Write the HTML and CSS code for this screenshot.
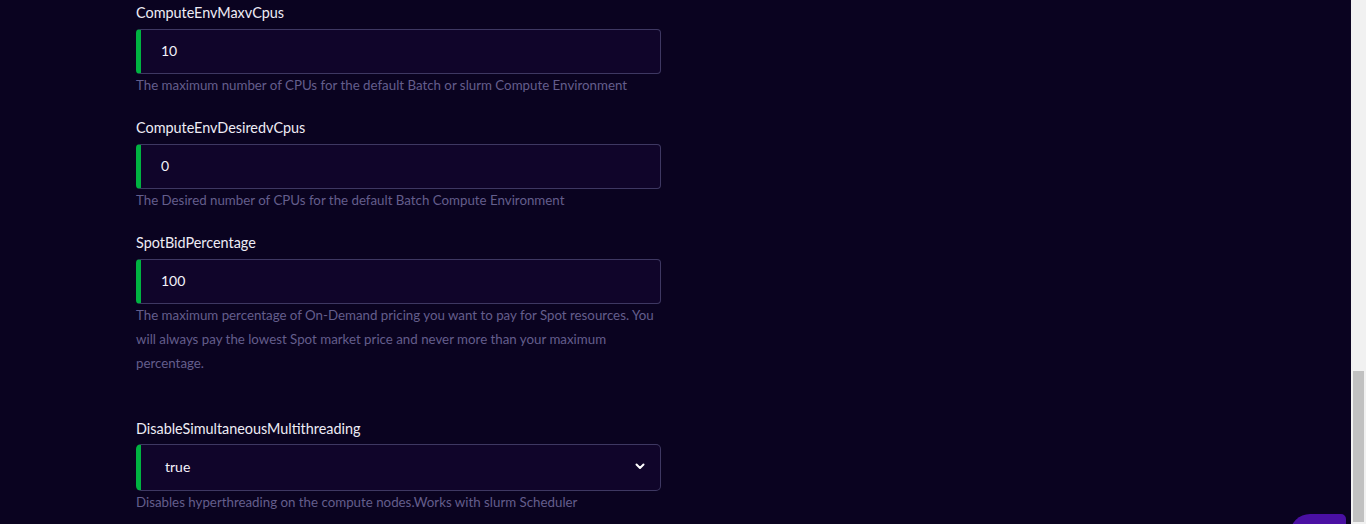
FILE: index.html
```html
<!DOCTYPE html>
<html lang="en">
<head>
<meta charset="utf-8">
<title>Compute settings</title>
<link rel="stylesheet" href="styles.css">
</head>
<body>
<div class="page">
  <main class="content">
    <div class="form">
      <div class="field">
        <label class="label">ComputeEnvMaxvCpus</label>
        <div class="input"><span class="value">10</span></div>
        <p class="desc">The maximum number of CPUs for the default Batch or slurm Compute Environment</p>
      </div>
      <div class="field">
        <label class="label">ComputeEnvDesiredvCpus</label>
        <div class="input"><span class="value">0</span></div>
        <p class="desc">The Desired number of CPUs for the default Batch Compute Environment</p>
      </div>
      <div class="field field-spaced">
        <label class="label">SpotBidPercentage</label>
        <div class="input"><span class="value">100</span></div>
        <p class="desc">The maximum percentage of On-Demand pricing you want to pay for Spot resources. You will always pay the lowest Spot market price and never more than your maximum percentage.</p>
      </div>
      <div class="field">
        <label class="label">DisableSimultaneousMultithreading</label>
        <div class="input select"><span class="value">true</span>
          <svg class="chev" width="10" height="7" viewBox="0 0 10 7"><path d="M1.5 1.5 L5 5 L8.5 1.5" fill="none" stroke="#fff" stroke-width="2" stroke-linecap="round" stroke-linejoin="round"/></svg>
        </div>
        <p class="desc">Disables hyperthreading on the compute nodes.Works with slurm Scheduler</p>
      </div>
    </div>
  </main>
  <div class="scrollbar"><div class="thumb"></div></div>
</div>
<div class="chat"></div>
</body>
</html>
```
FILE: styles.css
```css
html, body {
  margin: 0;
  padding: 0;
  height: 524px;
  overflow: hidden;
  background: #0a0320;
}
body {
  font-family: "Lato", "Noto Sans", sans-serif;
}
.page {
  display: flex;
  height: 524px;
}
.content {
  flex: 1;
  padding: 3px 0 0 136px;
}
.form {
  width: 525px;
  display: flex;
  flex-direction: column;
  gap: 21px;
}
.field {
  display: flex;
  flex-direction: column;
}
.field-spaced {
  margin-bottom: 23px;
}
.label {
  color: #eeecf5;
  font-size: 14.4px;
  line-height: 20px;
  height: 20px;
  margin-bottom: 6px;
}
.input {
  box-sizing: border-box;
  height: 45px;
  background: #10052a;
  border: 1px solid #3e3862;
  border-left: 5px solid #00b341;
  border-radius: 4px;
  display: flex;
  align-items: center;
  padding-left: 20px;
  padding-bottom: 2px;
  color: #f4f2fa;
  font-size: 14px;
}
.select {
  height: 47px;
  margin-top: -1px;
  padding-left: 24px;
  padding-right: 15px;
  justify-content: space-between;
  border-radius: 5px;
}
.chev {
  display: block;
}
.desc {
  margin: -1px 0 0;
  color: #645e8c;
  font-size: 13.3px;
  line-height: 24px;
}
.scrollbar {
  width: 15px;
  flex: none;
  background: #f1f1f1;
}
.thumb {
  margin: 371px 0 0 2px;
  width: 11px;
  height: 151px;
  background: #c1c1c1;
}
.chat {
  position: fixed;
  left: 1290px;
  top: 514px;
  width: 56px;
  height: 56px;
  background: #4a10a3;
  border-radius: 20px 5px 0 0;
}
```
